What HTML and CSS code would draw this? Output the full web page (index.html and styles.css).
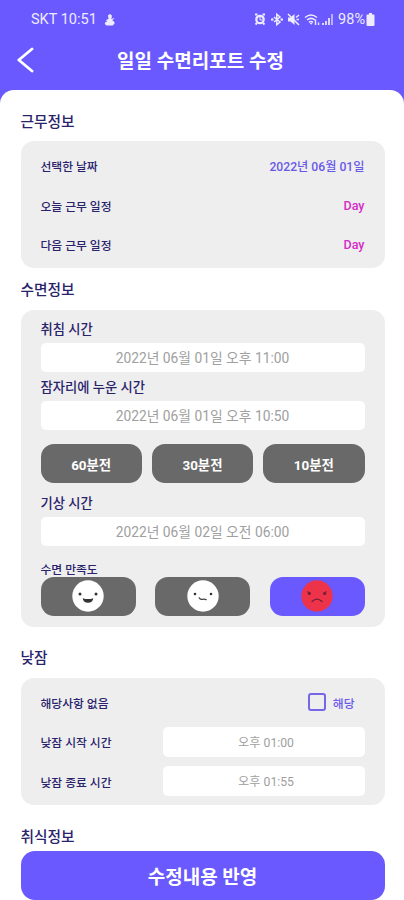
FILE: index.html
```
<!DOCTYPE html>
<html lang="ko">
<head>
<meta charset="utf-8">
<meta name="viewport" content="width=device-width, initial-scale=1">
<title>일일 수면리포트 수정</title>
<link rel="stylesheet" href="styles.css">
</head>
<body>
<div class="app">
  <div class="status">
    <span class="carrier">SKT 10:51</span>
    <svg class="snowman" width="12" height="14" viewBox="0 0 12 14" fill="currentColor"><path d="M4 2.200 6.200 1l1.600 1.400v2.100L7 6l3.600-1-2.400 2.400 2 1.100.3 2.200-1.900 1.800H2.500L.8 10.900l.5-1.600 2.100-.7L1.700 7.200 4.500 6z"/></svg>
    <span class="spacer"></span>
    <svg class="s-icon" width="12" height="13" viewBox="0 0 12 13"><path d="M1 1.500h2.500M8.500 1.500H11M1.500 11.500l1.500-1.500M10.500 11.500 9 10" stroke="currentColor" stroke-width="2"/><circle cx="6" cy="6.500" r="3.700" fill="none" stroke="currentColor" stroke-width="2.300"/><path d="M6 4v3h2" fill="none" stroke="currentColor" stroke-width="1"/></svg>
    <svg class="s-icon bt" width="12" height="13" viewBox="0 0 12 13" fill="none" stroke="currentColor" stroke-width="1.500"><path d="m3 4 6 5-3.200 2.700V1.300L9 4 3 9"/><circle cx="1.300" cy="6.500" r=".6"/><circle cx="10.700" cy="6.500" r=".6"/></svg>
    <svg class="s-icon mute" width="13" height="13" viewBox="0 0 13 13"><path d="M1 4.500h2.500L7.500 1v11L3.500 8.500H1z" fill="currentColor"/><path d="m1 1 11 11M9 4.500l3-2.500M9.500 6.500H12" fill="none" stroke="currentColor" stroke-width="1.500"/></svg>
    <svg class="s-icon wifi" width="17" height="13" viewBox="0 0 17 13" fill="none" stroke="currentColor" stroke-width="1.500"><path d="M1 4.500q6-5 12 0M3 7q4-3.300 8 0M5 9.300q2-1.500 4 0"/><path d="m5.800 10 1.400 1.800L8.500 10z" fill="currentColor" stroke="none"/><path d="M11.500 6.500V12M14.500 9.500V12" stroke-width="1.400"/></svg>
    <svg class="s-icon signal" width="12" height="13" viewBox="0 0 12 13" fill="currentColor"><path d="M0 10h2v2H0zM3 8h2v4H3zM6 5h2v7H6z" opacity=".85"/><path d="M9 1h2v11H9z" opacity=".6"/></svg>
    <span class="percent">98%</span>
    <svg class="battery" width="9" height="13" viewBox="0 0 9 13" fill="currentColor"><path d="M3 0h3v1.500h1.500q1 0 1 1V12q0 1-1 1h-6q-1 0-1-1V2.500q0-1 1-1H3z"/></svg>
  </div>
  <header class="topbar">
    <svg class="back" width="18" height="26" viewBox="0 0 18 26" fill="none" stroke="currentColor" stroke-width="2.800" stroke-linecap="round" stroke-linejoin="round"><path d="M15 2 1.800 13 15 24"/></svg>
    <h1>일일 수면리포트 수정</h1>
  </header>
  <main class="sheet">
    <h2>근무정보</h2>
    <section class="panel rows">
      <div class="row"><span>선택한 날짜</span><b class="date">2022년 06월 01일</b></div>
      <div class="row"><span>오늘 근무 일정</span><b class="day">Day</b></div>
      <div class="row"><span>다음 근무 일정</span><b class="day">Day</b></div>
    </section>

    <h2>수면정보</h2>
    <section class="panel sleep">
      <label>취침 시간</label>
      <div class="field">2022년 06월 01일 오후 11:00</div>
      <label>잠자리에 누운 시간</label>
      <div class="field">2022년 06월 01일 오후 10:50</div>
      <div class="presets">
        <button>60분전</button>
        <button>30분전</button>
        <button>10분전</button>
      </div>
      <label>기상 시간</label>
      <div class="field">2022년 06월 02일 오전 06:00</div>
      <label class="small">수면 만족도</label>
      <div class="faces">
        <button><svg width="32" height="32" viewBox="0 0 32 32"><circle cx="16" cy="16" r="15.700" fill="#fff"/><circle cx="8" cy="14" r="1.500" fill="#333"/><circle cx="24" cy="14" r="1.500" fill="#333"/><path d="M10.700 18.200q5.300 1.700 10.600 0-.8 4.500-5.300 4.500t-5.300-4.500z" fill="#333"/></svg></button>
        <button><svg width="32" height="32" viewBox="0 0 32 32"><circle cx="16" cy="16" r="15.700" fill="#fff"/><circle cx="8" cy="14" r="1.300" fill="#333"/><circle cx="24" cy="14" r="1.300" fill="#333"/><path d="M12.200 17.800q1.300 2 3.300 1.500t3.800.4" fill="none" stroke="#444" stroke-width="1.200" stroke-linecap="round"/></svg></button>
        <button class="on"><svg width="32" height="32" viewBox="0 0 32 32"><circle cx="16" cy="16" r="15.700" fill="#ec3349"/><g fill="none" stroke="#731f35" stroke-linecap="round"><path d="m6.500 11.800 2.500.8M25.500 11.800l-2.500.8" stroke-width=".9"/><path d="M11 21.500q5-5 10 0" stroke-width="1.200"/></g><circle cx="8.300" cy="13.500" r="1.600" fill="#731f35"/><circle cx="23.700" cy="13.500" r="1.600" fill="#731f35"/></svg></button>
      </div>
    </section>

    <h2 class="nap-title">낮잠</h2>
    <section class="panel rows">
      <div class="row"><span>해당사항 없음</span><span class="check"><i></i>해당</span></div>
      <div class="row"><span>낮잠 시작 시간</span><div class="field short">오후 01:00</div></div>
      <div class="row"><span>낮잠 종료 시간</span><div class="field short">오후 01:55</div></div>
    </section>

    <h2 class="food-title">취식정보</h2>
    <button class="submit">수정내용 반영</button>
  </main>
</div>
</body>
</html>
```
FILE: styles.css
```
* { box-sizing: border-box; }
body {
  margin: 0;
  background: #6959fe;
  font-family: Roboto, "Noto Sans CJK KR", sans-serif;
  color: #29236c;
}
button {
  border: 0;
  padding: 0;
  font: inherit;
  color: #fff;
}
.app {
  display: flex;
  flex-direction: column;
  width: 404px;
  height: 900px;
  overflow: hidden;
}
.status {
  display: flex;
  align-items: center;
  height: 38px;
  padding: 1px 29px 0 31px;
  color: #eeebff;
  font-size: 14.500px;
  line-height: 38px;
}
.snowman { margin-left: 7px; }
.spacer { flex: 1; }
.s-icon.bt { margin-left: 5px; }
.s-icon.mute { margin-left: 4px; }
.s-icon.wifi { margin-left: 4px; }
.s-icon.signal { margin-left: 1px; }
.percent { margin-left: 4px; }
.battery { margin-left: 1px; }
.topbar {
  display: grid;
  grid-template-columns: 18px 1fr 18px;
  align-items: center;
  height: 51.500px;
  padding: 0 20px 7px 17px;
  color: #fff;
}
h1 {
  margin: 0;
  padding-top: 3px;
  font-size: 19px;
  font-weight: 700;
  line-height: 28px;
  text-align: center;
}
.sheet {
  flex: 1;
  padding: 20px 19.500px 0 20.500px;
  background: #fff;
  border-radius: 14px 14px 0 0;
}
h2 {
  margin: 0;
  height: 31.500px;
  font-size: 14.700px;
  font-weight: 500;
  line-height: 24px;
}
.panel {
  background: #eee;
  border-radius: 13px;
  padding: 0 20px;
  margin-bottom: 10px;
}
.rows {
  height: 127px;
  padding-top: 4.800px;
}
.row {
  display: flex;
  align-items: center;
  justify-content: space-between;
  height: 39.500px;
  font-size: 11.800px;
  font-weight: 500;
}
.row b { font-weight: 500; }
.date { color: #6959e8; font-size: 12.200px; }
.day { color: #d52bc8; font-size: 12.500px; }
.sleep {
  height: 317.500px;
  padding-top: 8px;
}
label {
  display: block;
  height: 25px;
  font-size: 13.300px;
  font-weight: 500;
  line-height: 24px;
}
.field {
  height: 29px;
  margin-bottom: 4px;
  background: #fff;
  border-radius: 5px;
  color: #a0a0a0;
  font-size: 13.800px;
  line-height: 31px;
  text-align: center;
}
.presets {
  display: grid;
  grid-template-columns: repeat(3, 1fr);
  gap: 10px;
  margin: 14.500px 0 8.500px;
}
.presets button {
  height: 39px;
  background: #696969;
  border-radius: 13px;
  font-size: 13.400px;
  font-weight: 700;
}
label.small {
  height: 19px;
  margin-top: 12px;
  font-size: 11.800px;
  line-height: 24px;
}
.faces {
  display: grid;
  grid-template-columns: repeat(3, 95px);
  justify-content: space-between;
}
.faces button {
  display: flex;
  align-items: center;
  justify-content: center;
  height: 39px;
  background: #696969;
  border-radius: 13px;
}
.faces .on { background: #6959fe; }
.nap-title { margin-top: 19px; }
.field.short {
  width: 202px;
  height: 30px;
  margin: 0;
  font-size: 12.200px;
  font-weight: 400;
  line-height: 32px;
  padding-left: 5px;
}
.check {
  display: flex;
  align-items: center;
  gap: 7px;
  padding-right: 10px;
  color: #6959e8;
}
.check i {
  width: 18px;
  height: 18px;
  border: 2px solid #7566e8;
  border-radius: 3px;
}
.food-title {
  height: 26px;
  margin-top: 20px;
}
.submit {
  display: block;
  width: 100%;
  height: 49px;
  background: #6959fe;
  border-radius: 14px;
  font-size: 19px;
  font-weight: 700;
}
```
